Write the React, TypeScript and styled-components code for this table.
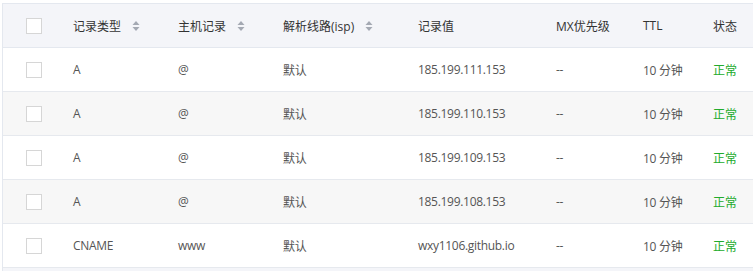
import styled, { createGlobalStyle } from "styled-components";

const GlobalStyle = createGlobalStyle`
  html, body {
    margin: 0;
    padding: 0;
    background: #fff;
  }
  body {
    font-family: "Open Sans", "Noto Sans CJK SC", sans-serif;
    font-size: 12px;
  }
`;

const records = [
  { type: "A", host: "@", line: "默认", value: "185.199.111.153" },
  { type: "A", host: "@", line: "默认", value: "185.199.110.153" },
  { type: "A", host: "@", line: "默认", value: "185.199.109.153" },
  { type: "A", host: "@", line: "默认", value: "185.199.108.153" },
  { type: "CNAME", host: "www", line: "默认", value: "wxy1106.github.io" },
];

const COLS = "70px 105px 105px 135px 138px 87px 70px 1fr";

export default function App() {
  return (
    <>
      <GlobalStyle />
      <Page>
        <Table>
          <HeadRow>
            <CheckCell>
              <Checkbox />
            </CheckCell>
            <HeadCell>
              记录类型
              <SortIcon />
            </HeadCell>
            <HeadCell>
              主机记录
              <SortIcon />
            </HeadCell>
            <HeadCell>
              解析线路(isp)
              <SortIcon />
            </HeadCell>
            <HeadCell>记录值</HeadCell>
            <HeadCell>MX优先级</HeadCell>
            <HeadCell>TTL</HeadCell>
            <HeadCell>状态</HeadCell>
          </HeadRow>
          {records.map((r, i) => (
            <Row key={i} striped={i % 2 === 1}>
              <CheckCell>
                <Checkbox />
              </CheckCell>
              <Cell>{r.type}</Cell>
              <Cell>{r.host}</Cell>
              <Cell>{r.line}</Cell>
              <Cell>{r.value}</Cell>
              <Cell>--</Cell>
              <Cell>10 分钟</Cell>
              <Status>正常</Status>
            </Row>
          ))}
          <Footer />
        </Table>
      </Page>
    </>
  );
}

const SortIcon = () => (
  <SortWrap>
    <svg width="8" height="12" viewBox="0 0 8 12">
      <path d="M4 1 L7.5 5 L0.5 5 Z" fill="#a4a9b3" />
      <path d="M4 11 L7.5 7 L0.5 7 Z" fill="#a4a9b3" />
    </svg>
  </SortWrap>
);

const Page = styled.div`
  padding: 3px 0 0 2px;
`;

const Table = styled.div`
  border-left: 1px solid #e4e8ef;
  border-top: 1px solid #e4e8ef;
`;

const HeadRow = styled.div`
  display: grid;
  grid-template-columns: ${COLS};
  height: 43px;
  align-items: center;
  background: #f4f5f9;
  border-bottom: 1px solid #e4e8ef;
`;

const Row = styled.div<{ striped?: boolean }>`
  display: grid;
  grid-template-columns: ${COLS};
  height: 43px;
  align-items: center;
  background: ${(p) => (p.striped ? "#f7f7f7" : "#fff")};
  border-bottom: 1px solid #e6e9ee;
`;

const CheckCell = styled.div`
  padding-left: 23px;
  display: flex;
  align-items: center;
`;

const Checkbox = styled.span`
  display: inline-block;
  width: 14px;
  height: 14px;
  border: 1px solid #d6d6d6;
  background: #fff;
`;

const HeadCell = styled.div`
  display: flex;
  align-items: center;
  color: #333;
  white-space: nowrap;
`;

const SortWrap = styled.span`
  display: inline-flex;
  margin-left: 11px;
`;

const Cell = styled.div`
  color: #555;
  white-space: nowrap;
  letter-spacing: -0.3px;
`;

const Status = styled(Cell)`
  color: #22ab2c;
  letter-spacing: 0;
`;

const Footer = styled.div`
  height: 4px;
  background: #f4f5f9;
`;
